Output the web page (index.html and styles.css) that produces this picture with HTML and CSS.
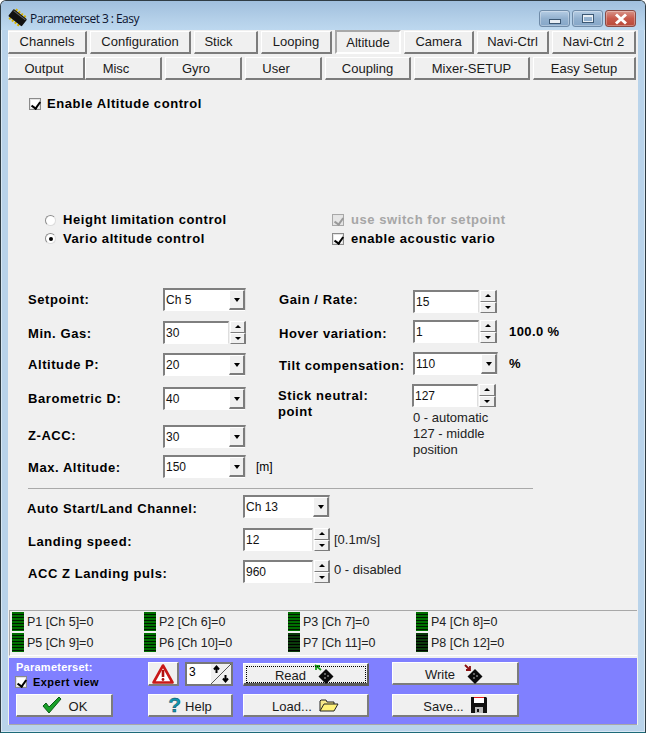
FILE: index.html
```html
<!DOCTYPE html>
<html lang="en">
<head>
<meta charset="utf-8">
<title>Parameterset 3 : Easy</title>
<link rel="stylesheet" href="styles.css">
</head>
<body>
<div class="window">
  <header class="titlebar">
    <svg class="app-icon" width="22" height="22" viewBox="0 0 22 22">
      <g transform="rotate(38 11 11)">
        <path d="M4 4.500h2v3H4zM7.500 4.500h2v3h-2zM11 4.500h2v3h-2zM14.500 4.500h2v3h-2zM4 14.500h2v3H4zM7.500 14.500h2v3h-2zM11 14.500h2v3h-2zM14.500 14.500h2v3h-2z" fill="#d8b400"/>
        <rect x="2" y="6.500" width="17" height="9" rx="1" fill="#111"/>
        <path d="M3 8h15" stroke="#666" stroke-width="1"/>
      </g>
    </svg>
    <span class="title-text">Parameterset 3 : Easy</span>
    <div class="caption">
      <div class="cap cap-min"><span class="glyph-min"></span></div>
      <div class="cap cap-max"><span class="glyph-max"></span></div>
      <div class="cap cap-close">
        <svg width="16" height="12" viewBox="0 0 16 12"><path d="M3 1.500 13 10.500M13 1.500 3 10.500" stroke="#fff" stroke-width="3"/></svg>
      </div>
    </div>
  </header>

  <div class="client">
    <nav class="tabs tabs-a">
      <button class="btn">Channels</button>
      <button class="btn">Configuration</button>
      <button class="btn shift-l">Stick</button>
      <button class="btn">Looping</button>
      <button class="btn tab-on">Altitude</button>
      <button class="btn">Camera</button>
      <button class="btn">Navi-Ctrl</button>
      <button class="btn">Navi-Ctrl 2</button>
    </nav>
    <nav class="tabs tabs-b">
      <button class="btn shift-s">Output</button>
      <button class="btn tab-join shift-l">Misc</button>
      <button class="btn shift-l">Gyro</button>
      <button class="btn shift-l">User</button>
      <button class="btn">Coupling</button>
      <button class="btn">Mixer-SETUP</button>
      <button class="btn">Easy Setup</button>
    </nav>

    <label class="opt enable"><span class="check on"></span><b>Enable Altitude control</b></label>

    <div class="modes">
      <label class="opt"><span class="radio"></span><b>Height limitation control</b></label>
      <label class="opt off"><span class="check on dim"></span><b>use switch for setpoint</b></label>
      <label class="opt"><span class="radio sel"></span><b>Vario altitude control</b></label>
      <label class="opt"><span class="check on"></span><b>enable acoustic vario</b></label>
    </div>

    <div class="params">
      <div class="col col-l">
        <div class="row r1"><b class="lbl">Setpoint:</b><div class="combo wl"><span class="val">Ch 5</span><span class="drop"></span></div></div>
        <div class="row r2"><b class="lbl nudge1">Min. Gas:</b><div class="spin"><span class="val edit el">30</span><span class="arrows"><i class="up"></i><i class="dn"></i></span></div></div>
        <div class="row r3"><b class="lbl">Altitude P:</b><div class="combo wl"><span class="val">20</span><span class="drop"></span></div></div>
        <div class="row r4"><b class="lbl">Barometric D:</b><div class="combo wl"><span class="val">40</span><span class="drop"></span></div></div>
        <div class="row r5"><b class="lbl nudge-up1">Z-ACC:</b><div class="combo wl"><span class="val">30</span><span class="drop"></span></div></div>
        <div class="row r6"><b class="lbl nudge1">Max. Altitude:</b><div class="combo wl"><span class="val">150</span><span class="drop"></span></div><span class="unit-m">[m]</span></div>
      </div>
      <div class="col col-r">
        <div class="row q1"><b class="lbl nudge-up2">Gain / Rate:</b><div class="spin"><span class="val edit er">15</span><span class="arrows ar"><i class="up"></i><i class="dn"></i></span></div></div>
        <div class="row q2"><b class="lbl nudge2">Hover variation:</b><div class="spin"><span class="val edit er">1</span><span class="arrows ar"><i class="up"></i><i class="dn"></i></span></div><b class="suffix">100.0 %</b></div>
        <div class="row q3"><b class="lbl nudge2">Tilt compensation:</b><div class="combo wr"><span class="val">110</span><span class="drop"></span></div><b class="suffix suffix-pct">%</b></div>
        <div class="row q4">
          <b class="lbl lbl-two">Stick neutral:<br>point</b>
          <div class="stick">
            <div class="spin"><span class="val edit er">127</span><span class="arrows ar"><i class="up"></i><i class="dn"></i></span></div>
            <p class="hint">0 - automatic<br>127 - middle<br>position</p>
          </div>
        </div>
      </div>
    </div>

    <hr class="sep">

    <div class="landing">
      <div class="row l1"><b class="lbl nudge4">Auto Start/Land Channel:</b><div class="combo wb"><span class="val">Ch 13</span><span class="drop"></span></div></div>
      <div class="row l2"><b class="lbl nudge4">Landing speed:</b><div class="spin"><span class="val edit eb">12</span><span class="arrows"><i class="up"></i><i class="dn"></i></span></div><span class="note">[0.1m/s]</span></div>
      <div class="row l3"><b class="lbl nudge4">ACC Z Landing puls:</b><div class="spin"><span class="val edit eb">960</span><span class="arrows"><i class="up"></i><i class="dn"></i></span></div><span class="note note-up">0 - disabled</span></div>
    </div>

    <section class="status">
      <div class="ch"><span class="led"></span>P1 [Ch 5]=0</div>
      <div class="ch"><span class="led"></span>P2 [Ch 6]=0</div>
      <div class="ch"><span class="led"></span>P3 [Ch 7]=0</div>
      <div class="ch"><span class="led"></span>P4 [Ch 8]=0</div>
      <div class="ch"><span class="led"></span>P5 [Ch 9]=0</div>
      <div class="ch"><span class="led"></span>P6 [Ch 10]=0</div>
      <div class="ch"><span class="led dark"></span>P7 [Ch 11]=0</div>
      <div class="ch"><span class="led dark"></span>P8 [Ch 12]=0</div>
    </section>

    <footer class="actions">
      <div class="set-info g1">
        <b class="set-title">Parameterset:</b>
        <label class="opt expert"><span class="check on"></span><b>Expert view</b></label>
      </div>
      <div class="set-picker g2">
        <button class="btn warn">
          <svg width="22" height="20" viewBox="0 0 22 20"><path d="M11 1.500 20.500 18.500H1.500Z" fill="#fff" stroke="#c81818" stroke-width="2.600" stroke-linejoin="round"/><path d="M11 6v7" stroke="#b01010" stroke-width="2.600"/><circle cx="11" cy="15.500" r="1.400" fill="#b01010"/></svg>
        </button>
        <div class="set-box">
          <span class="set-num">3</span>
          <span class="set-arrows">
            <svg width="20" height="20" viewBox="0 0 20 20"><path d="M0 20 20 0" stroke="#555" stroke-width="1"/><path d="M5.500 9V3M3 5.500l2.500-3 2.500 3" fill="none" stroke="#000" stroke-width="2"/><path d="M14.500 11v6M12 14.500l2.500 3 2.500-3" fill="none" stroke="#000" stroke-width="2"/></svg>
          </span>
        </div>
      </div>
      <button class="btn act focus g3"><span>Read</span>
        <svg class="chip" width="24" height="22" viewBox="0 0 24 22"><path d="M3 1l6 5M4 6V2h4" fill="none" stroke="#18a018" stroke-width="1.800"/><path d="M14 5l7.500 7.500-7.500 7.500-7.500-7.500Z" fill="#0a0a0a"/><circle cx="13" cy="10" r=".8" fill="#ccc"/><circle cx="16" cy="12" r=".8" fill="#ccc"/><circle cx="13" cy="14" r=".8" fill="#ccc"/></svg>
      </button>
      <button class="btn act g4"><span>Write</span>
        <svg class="chip" width="24" height="22" viewBox="0 0 24 22"><path d="M4 1l5 5M9 2v4H5" fill="none" stroke="#8a1010" stroke-width="1.800"/><path d="M14 5l7.500 7.500-7.500 7.500-7.500-7.500Z" fill="#0a0a0a"/><circle cx="13" cy="10" r=".8" fill="#ccc"/><circle cx="16" cy="12" r=".8" fill="#ccc"/><circle cx="13" cy="14" r=".8" fill="#ccc"/></svg>
      </button>

      <button class="btn ok g1">
        <svg width="22" height="18" viewBox="0 0 22 18"><path d="M2 10l3-3 3 4L18 1l2 2L8 17Z" fill="#18a028" stroke="#0a5a16" stroke-width="1"/></svg>
        <span>OK</span>
      </button>
      <button class="btn help g2"><b class="qmark">?</b><span>Help</span></button>
      <button class="btn act g3"><span>Load...</span>
        <svg width="20" height="14" viewBox="0 0 20 14"><path d="M1 13V3l1-1h5l1 2h7v2" fill="#f6e98a" stroke="#222" stroke-width="1"/><path d="M1 13l4-7h14l-4 7Z" fill="#fff27a" stroke="#222" stroke-width="1"/></svg>
      </button>
      <button class="btn act g4"><span>Save...</span>
        <svg width="16" height="16" viewBox="0 0 16 16"><path d="M0 0H15L16 1V16H0Z" fill="#111"/><path d="M3 0H13V1H3Z" fill="#e81818"/><path d="M3 1H13V6H3Z" fill="#fff"/><path d="M4 10H12V16H4Z" fill="#bbb"/><path d="M6 12H8V15H6Z" fill="#111"/></svg>
      </button>
    </footer>
  </div>
</div>
</body>
</html>
```

FILE: styles.css
```css
* { box-sizing: border-box; }

html, body { margin: 0; padding: 0; background: #fff; }

body {
  width: 646px;
  height: 733px;
  overflow: hidden;
  font: 12px/14px "Liberation Sans", Arial, sans-serif;
  color: #000;
}

b { font-weight: 700; }

.window {
  width: 646px;
  height: 733px;
  display: flex;
  flex-direction: column;
  border: 1px solid #2f3c44;
  border-bottom-color: #1d6a78;
  border-radius: 6px 6px 0 0;
  background: #b9d3ea;
  box-shadow: inset 0 0 0 1px #d8e8f4;
}

/* ---- title bar ---- */
.titlebar {
  height: 29px;
  flex: none;
  display: flex;
  align-items: flex-start;
  padding: 6px 9px 0 6px;
  background: linear-gradient(#a0bfdd, #b3cfe8 60%, #bdd8ef);
  border-radius: 5px 5px 0 0;
}

.app-icon { flex: none; }

.title-text {
  margin: 5px 0 0 1px;
  font: 12px/14px "Open Sans", "Liberation Sans", sans-serif;
  letter-spacing: -.55px;
  color: #0c1430;
}

.caption {
  margin-left: auto;
  margin-top: 3px;
  display: flex;
  gap: 2px;
}

.cap {
  width: 31px;
  height: 17px;
  display: flex;
  align-items: center;
  justify-content: center;
  border: 1px solid #6f8ba8;
  border-radius: 3px;
  background: linear-gradient(#b6cde4, #93b1cf 50%, #85a6c8);
  box-shadow: inset 0 0 0 1px rgba(255,255,255,.3);
}

.cap-close {
  border-color: #8a4a44;
  background: linear-gradient(#d8958a, #c85a4c 50%, #b84a3a);
}

.glyph-min {
  width: 12px;
  height: 5px;
  margin-top: 5px;
  background: #e8eef4;
  border: 1px solid #3c5874;
}

.glyph-max {
  width: 12px;
  height: 9px;
  border: 2px solid #e8eef4;
  outline: 1px solid #3c5874;
  outline-offset: -1px;
  border-top-width: 3px;
}

/* ---- client ---- */
.client {
  width: 630px;
  height: 695px;
  margin-left: 7px;
  background: #f0f0f0;
}

.btn {
  display: flex;
  align-items: center;
  justify-content: center;
  padding: 0;
  height: 23px;
  font: 13px/15px "Liberation Sans", Arial, sans-serif;
  color: #1a1a1a;
  background: #f0f0f0;
  border-style: solid;
  border-width: 1px 2px 2px 1px;
  border-color: #fff #7c7c7c #7c7c7c #fff;
  border-radius: 0;
}

.tabs {
  display: grid;
  column-gap: 3px;
  justify-content: start;
  background: #f0f0f0;
}

.tabs-a {
  grid-template-columns: 79px 101px 64px 71px 66px 70px 72px 84px;
  height: 27px;
  padding-top: 1px;
}

.tabs-a .btn { margin-bottom: 1px; padding-bottom: 1px; }

.tabs-b {
  grid-template-columns: 77px 74px 77px 77px 86px 116px 103px;
  height: 23px;
}

.tab-join { margin-left: -3px; }
.shift-s { padding-right: 4px; }
.shift-l { padding-right: 14px; }

.tabs-a .tab-on {
  margin-top: -1px;
  height: 24px;
  border-width: 2px;
  border-color: #a8a8a8 #fff #fff #a8a8a8;
  padding: 1px 0 0;
}

/* ---- options ---- */
.opt {
  display: flex;
  align-items: center;
  gap: 7px;
  font-size: 13px;
  letter-spacing: .57px;
}

.off { color: #a6a6a6; }

.check {
  position: relative;
  flex: none;
  width: 12px;
  height: 12px;
  background: #fff;
  border: 1px solid #8a8a8a;
  box-shadow: inset 0 0 0 1px #e4e4e4;
}

.check.on::after {
  content: "";
  position: absolute;
  left: 3px;
  top: 1px;
  width: 4px;
  height: 7px;
  border: solid #000;
  border-width: 0 2px 2px 0;
  transform: rotate(35deg);
}

.check.dim { background: #e6e6e6; border-color: #a8a8a8; }
.check.dim::after { border-color: #9a9a9a; }

.radio {
  position: relative;
  flex: none;
  width: 11px;
  height: 11px;
  border-radius: 50%;
  background: #fff;
  border: 1px solid;
  border-color: #8c8c8c #dcdcdc #dcdcdc #8c8c8c;
}

.radio.sel::after {
  content: "";
  position: absolute;
  left: 2.500px;
  top: 2.500px;
  width: 4px;
  height: 4px;
  border-radius: 50%;
  background: #000;
}

.enable {
  height: 14px;
  margin: 17px 0 0 21px;
  width: max-content;
  gap: 6px;
}

.modes {
  display: grid;
  grid-template-columns: 287px 1fr;
  grid-auto-rows: 18.500px;
  margin: 100px 0 0 37px;
}

.modes .opt { height: 18px; }

/* ---- parameter columns ---- */
.params {
  display: flex;
  margin: 40px 0 0 20px;
  height: 200px;
}

.col-l { width: 251px; flex: none; }

.row { display: flex; align-items: center; }

.lbl {
  font-size: 13px;
  letter-spacing: .57px;
  white-space: nowrap;
}

.col-l .lbl { width: 135px; flex: none; }
.col-r .lbl { width: 134px; flex: none; }

.nudge1 { margin-top: 2px; }
.nudge2 { margin-top: 4px; }
.nudge4 { margin-top: 4px; }
.nudge-up1 { margin-top: -2px; }
.nudge-up2 { margin-top: -4px; }

.r1 { height: 23px; margin-bottom: 10px; }
.r2 { height: 23px; margin-bottom: 9px; }
.r3 { height: 23px; margin-bottom: 11px; }
.r4 { height: 23px; margin-bottom: 15px; }
.r5 { height: 23px; margin-bottom: 7px; }
.r6 { height: 23px; }

.q1 { height: 23px; margin: 2px 0 7px; }
.q2 { height: 23px; margin-bottom: 9px; }
.q3 { height: 23px; margin-bottom: 9px; }
.q4 { align-items: flex-start; margin-left: -1px; }

.lbl-two { line-height: 16px; padding-top: 4px; }
.col-r .lbl-two { width: 134px; }

.val {
  display: block;
  padding: 3px 0 0 1px;
  font-size: 12px;
  line-height: 15px;
  color: #111;
}

.combo, .edit {
  background: #fff;
  border-style: solid;
  border-width: 2px 1px 1px 2px;
  border-color: #7f7f7f #dedede #fff #7f7f7f;
}

.combo {
  position: relative;
  height: 23px;
  flex: none;
}

.wl { width: 83px; }
.wr { width: 85px; }
.wb { width: 87px; }

.drop {
  position: absolute;
  top: 0;
  right: 0;
  width: 16px;
  height: 20px;
  background: #f0f0f0;
  border-style: solid;
  border-width: 1px 2px 2px 1px;
  border-color: #fff #7c7c7c #7c7c7c #fff;
  display: flex;
  align-items: center;
  justify-content: center;
}

.drop::after {
  content: "";
  border: solid transparent;
  border-width: 4px 3.500px 0;
  border-top-color: #000;
}

.spin { display: flex; gap: 1px; flex: none; }

.edit { height: 23px; }
.el { width: 66px; }
.er { width: 66px; }
.eb { width: 70px; }

.arrows {
  width: 16px;
  height: 23px;
  flex: none;
  display: flex;
  flex-direction: column;
}

.ar { width: 17px; }

.arrows i {
  flex: 1;
  display: flex;
  align-items: center;
  justify-content: center;
  background: #f0f0f0;
  border-style: solid;
  border-width: 1px 2px 1px 1px;
  border-color: #fff #7c7c7c #7c7c7c #fff;
}

.arrows i::after {
  content: "";
  border: solid transparent;
}

.arrows .up::after { border-width: 0 3px 3px; border-bottom-color: #000; }
.arrows .dn::after { border-width: 3px 3px 0; border-top-color: #000; }

.suffix {
  margin-left: 12px;
  font-size: 13px;
  letter-spacing: .4px;
}

.suffix-pct { margin-left: 11px; }

.unit-m { margin-left: 10px; font-size: 12px; margin-top: 1px; }

.hint {
  margin: 3px 0 0 1px;
  font-size: 13px;
  line-height: 16px;
  color: #222;
}

.sep {
  width: 505px;
  height: 1px;
  margin: 0 0 6px 20px;
  border: 0;
  background: #a9a9a9;
}

/* ---- landing ---- */
.landing { padding-left: 19px; }
.landing .lbl { width: 216px; flex: none; }
.l1 { height: 23px; margin-bottom: 10px; }
.l2 { height: 23px; margin-bottom: 9px; }
.l3 { height: 23px; }
.l2 .lbl, .l3 .lbl { padding-left: 1px; }
.note { margin-left: 4px; font-size: 13px; color: #222; }
.note-up { margin-top: -3px; }

/* ---- status ---- */
.status {
  width: 628px;
  height: 46px;
  margin: 27px 0 0 1px;
  padding: 1px 0 0 2px;
  display: grid;
  grid-template-columns: 132px 144px 128px 1fr;
  grid-auto-rows: 21px;
  border: solid;
  border-width: 1px 0 1px 1px;
  border-color: #a8a8a8 #fff #fff #a8a8a8;
  background: #f0f0f0;
}

.ch {
  display: flex;
  align-items: center;
  gap: 3px;
  padding-bottom: 2px;
  font-size: 12.500px;
  color: #222;
}

.led {
  width: 12px;
  height: 19px;
  flex: none;
  align-self: flex-start;
  background: repeating-linear-gradient(#007000 0 2px, #001800 2px 3px);
}

.led.dark { background: repeating-linear-gradient(#0a3a0a 0 2px, #000 2px 3px); }

/* ---- bottom bar ---- */
.actions {
  width: 628px;
  height: 67px;
  margin: 2px 0 0 1px;
  padding: 4px 0 0 7px;
  display: grid;
  grid-template-columns: 97px 35px 85px 10px 126px 23px 127px;
  grid-template-rows: 24px 23px;
  row-gap: 8px;
  background: #8080ff;
  border-bottom: 1px solid #a8a8a8;
  justify-content: start;
}

.g1 { grid-column: 1; }
.g2 { grid-column: 3; }
.g3 { grid-column: 5; }
.g4 { grid-column: 7; }

.set-title {
  display: block;
  margin-top: -1px;
  color: #fff;
  font-size: 11px;
  line-height: 12px;
  letter-spacing: .25px;
}

.expert { gap: 6px; margin: 2px 0 0 -1px; font-size: 11px; letter-spacing: .45px; white-space: nowrap; }

.set-picker { display: flex; gap: 6px; }

.warn { width: 31px; height: 24px; flex: none; }

.set-box {
  width: 48px;
  height: 24px;
  flex: none;
  display: flex;
  border: 2px solid #777;
  background: #f0f0f0;
}

.set-num {
  width: 24px;
  padding: 1px 0 0 2px;
  background: #fff;
  font-size: 12px;
  line-height: 14px;
}

.set-arrows { width: 20px; height: 20px; display: block; }
.set-arrows svg { display: block; }

.act { gap: 7px; }
.act span { margin-top: 3px; }
.ok span, .help span { margin-top: 2px; }

.focus {
  margin-top: 1px;
  height: 23px;
  border-color: #fff #5c5c5c #5c5c5c #fff;
  border-width: 1px 2px 3px 1px;
  outline: 1px dotted #000;
  outline-offset: -4px;
}

.chip { margin-top: 3px; margin-left: -1px; }

.ok { gap: 6px; }

.help { gap: 4px; }

.qmark {
  font: 700 21px/20px "Liberation Sans", sans-serif;
  color: #0f97ad;
  -webkit-text-stroke: .4px #0a3c5a;
}
```
